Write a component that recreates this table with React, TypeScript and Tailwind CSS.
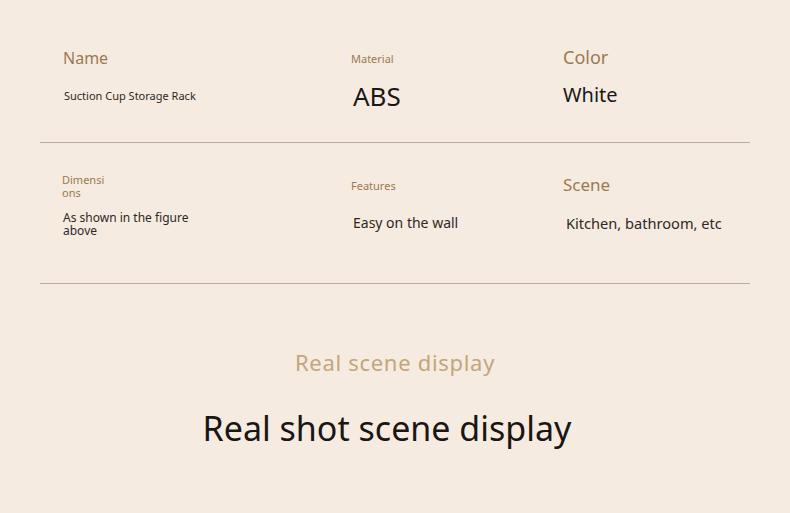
export default function App() {
  const font = { fontFamily: '"Noto Sans", "Open Sans", sans-serif' };
  return (
    <div className="w-[790px] h-[513px] overflow-hidden bg-[#f6ebe0]" style={font}>
      <div className="mx-10">
        {/* spec row 1 */}
        <div className="h-[143px] border-b border-[#bcad9d] grid grid-cols-[288px_212px_1fr] pl-[23px]">
          <div className="flex flex-col pt-[48px]">
            <span className="text-[16px] leading-[20px] text-[#9b7a51]">Name</span>
            <span className="mt-[21px] pl-px text-[11px] leading-[14px] text-[#2e2926]">Suction Cup Storage Rack</span>
          </div>
          <div className="flex flex-col pt-[52px]">
            <span className="text-[11px] leading-[14px] text-[#9b7a51]">Material</span>
            <span className="mt-[15px] pl-[2px] text-[26px] leading-[30px] text-[#1c1816]">ABS</span>
          </div>
          <div className="flex flex-col pt-[46px]">
            <span className="text-[18px] leading-[22px] text-[#9b7a51]">Color</span>
            <span className="mt-[15px] text-[20px] leading-[24px] text-[#1c1816]">White</span>
          </div>
        </div>

        {/* spec row 2 */}
        <div className="h-[141px] border-b border-[#bcad9d] grid grid-cols-[288px_212px_1fr] pl-[23px]">
          <div className="flex flex-col pt-[30px]">
            <span className="-ml-px text-[11px] leading-[13px] text-[#9b7a51]">
              Dimensi
              <br />
              ons
            </span>
            <span className="mt-[12px] text-[12px] leading-[13px] text-[#2e2926]">
              As shown in the figure
              <br />
              above
            </span>
          </div>
          <div className="flex flex-col pt-[36px]">
            <span className="text-[11px] leading-[14px] text-[#9b7a51]">Features</span>
            <span className="mt-[21px] pl-[2px] text-[14px] leading-[18px] text-[#2e2926]">Easy on the wall</span>
          </div>
          <div className="flex flex-col pt-[31px]">
            <span className="text-[17px] leading-[22px] text-[#9b7a51]">Scene</span>
            <span className="mt-[18px] pl-[3px] text-[14.6px] leading-[18px] text-[#2e2926]">Kitchen, bathroom, etc</span>
          </div>
        </div>
      </div>

      {/* section heading */}
      <div className="flex flex-col items-center pt-[64px]">
        <h3 className="text-[22px] leading-[28px] tracking-[0.7px] text-[#c3a67c]">Real scene display</h3>
        <h2 className="mt-[31px] pr-4 text-[34px] leading-[42px] text-[#1a1614]">Real shot scene display</h2>
      </div>
    </div>
  );
}
